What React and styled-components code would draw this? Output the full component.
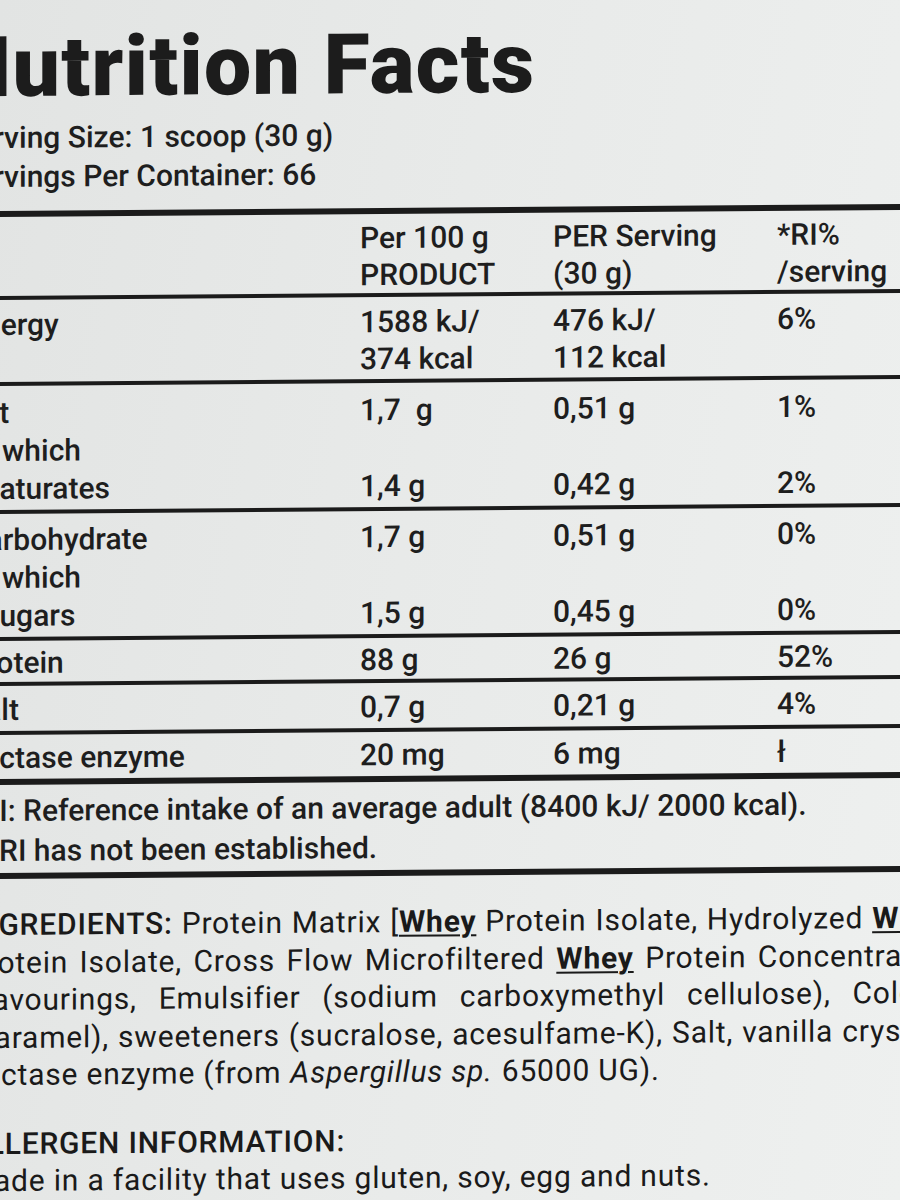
import styled, { createGlobalStyle } from "styled-components";

const GlobalStyle = createGlobalStyle`
  html, body {
    margin: 0;
    padding: 0;
  }
  body {
    background: #e7e9e8;
    font-family: Roboto, "Liberation Sans", sans-serif;
    color: #1e1e1e;
  }
`;

const Page = styled.div`
  width: 900px;
  height: 1200px;
  overflow: hidden;
  background: linear-gradient(100deg, #e2e4e3 0%, #e8eae9 45%, #eef0ef 100%);
`;

const Label = styled.div`
  width: 1000px;
  margin-left: -33px;
  padding-top: 26px;
  transform: skewY(-0.45deg);
  transform-origin: 33px 0;
`;

const Title = styled.h1`
  margin: 0 0 8px -15px;
  font-size: 84px;
  line-height: 84px;
  font-weight: 900;
  letter-spacing: 1.4px;
  color: #1c1c1c;
`;

const Serving = styled.div`
  margin-left: -8px;
  font-size: 30px;
  line-height: 39px;
  font-weight: 500;
`;

const Rule = styled.div`
  height: ${(p) => p.$h || 4}px;
  background: #1b1b1b;
  margin-top: ${(p) => p.$mt || 0}px;
`;

const Group = styled.div`
  padding: ${(p) => p.$pt || 0}px 0 ${(p) => p.$pb || 0}px;
  border-bottom: ${(p) => p.$line || 4}px solid #1b1b1b;
`;

const Row = styled.div`
  display: grid;
  grid-template-columns: 393px 193px 224px 1fr;
  font-size: 30px;
  line-height: ${(p) => p.$lh || 37}px;
  font-weight: 500;
`;

const Cell = styled.div`
  align-self: ${(p) => (p.$bottom ? "end" : "start")};
  white-space: pre;
`;

const Indent = styled.span`
  display: block;
  padding-left: 17px;
`;

const Note = styled.div`
  padding: 6px 0 2px;
  border-bottom: 6px solid #1b1b1b;
  font-size: 30px;
  line-height: 40px;
  font-weight: 500;
`;

const Mark = styled.span`
  display: inline-block;
  width: 32px;
`;

const Ingredients = styled.div`
  width: 978px;
  padding-top: 27px;
  font-size: 30px;
  line-height: 37.5px;
  font-weight: 400;
  letter-spacing: 0.8px;
  color: #1a1a1a;
`;

const Line = styled.div`
  display: flex;
  justify-content: ${(p) => (p.$justify ? "space-between" : "flex-start")};
  gap: 9px;
  white-space: nowrap;
`;

const Strong = styled.span`
  font-weight: 500;
`;

const Allergen = styled.span`
  font-weight: 700;
  text-decoration: underline;
  text-decoration-thickness: 2px;
  text-underline-offset: 3px;
`;

const Allergens = styled.div`
  margin-top: 31px;
  font-size: 30px;
  line-height: 37px;
  letter-spacing: 0.8px;
  color: #1a1a1a;
`;

const nutrients = [
  { pt: 6, pb: 2, rows: [{ label: "Energy", per100: "1588 kJ/\n374 kcal", serving: "476 kJ/\n112 kcal", ri: "6%" }] },
  {
    pt: 8,
    pb: 2,
    lh: 38,
    rows: [
      { label: "Fat", per100: "1,7  g", serving: "0,51 g", ri: "1%" },
      { label: "of which", sub: "saturates", per100: "1,4 g", serving: "0,42 g", ri: "2%" },
    ],
  },
  {
    pt: 7,
    pb: 2,
    lh: 38,
    rows: [
      { label: "Carbohydrate", per100: "1,7 g", serving: "0,51 g", ri: "0%" },
      { label: "of which", sub: "sugars", per100: "1,5 g", serving: "0,45 g", ri: "0%" },
    ],
  },
  { pt: 3, pb: 1, rows: [{ label: "Protein", per100: "88 g", serving: "26 g", ri: "52%" }] },
  { pt: 5, pb: 3, rows: [{ label: "Salt", per100: "0,7 g", serving: "0,21 g", ri: "4%" }] },
  { pt: 4, pb: 3, line: 6, rows: [{ label: "Lactase enzyme", per100: "20 mg", serving: "6 mg", ri: "ł" }] },
];

const W = () => <Allergen>Whey</Allergen>;

const ingredientLines = [
  [<Strong>INGREDIENTS:</Strong>, "Protein", "Matrix", <>[<W /></>, "Protein", "Isolate,", "Hydrolyzed", <W />],
  ["Protein", "Isolate,", "Cross", "Flow", "Microfiltered", <W />, "Protein", "Concentrate],"],
  ["Flavourings,", "Emulsifier", "(sodium", "carboxymethyl", "cellulose),", "Colour"],
  ["(caramel),", "sweeteners", "(sucralose,", "acesulfame-K),", "Salt,", "vanilla", "crystals,"],
];

const App = () => {
  return (
    <Page>
      <GlobalStyle />
      <Label>
        <Title>Nutrition Facts</Title>
        <Serving>Serving Size: 1 scoop (30 g)</Serving>
        <Serving>Servings Per Container: 66</Serving>

        <Rule $h={6} $mt={15} />
        <Group $pt={5} $pb={0}>
          <Row>
            <Cell />
            <Cell>{"Per 100 g\nPRODUCT"}</Cell>
            <Cell>{"PER Serving\n(30 g)"}</Cell>
            <Cell>{"*RI%\n/serving"}</Cell>
          </Row>
        </Group>

        {nutrients.map((group, i) => (
          <Group key={i} $pt={group.pt} $pb={group.pb} $line={group.line}>
            {group.rows.map((r) => (
              <Row key={r.label + (r.sub || "")} $lh={group.lh}>
                <Cell>
                  {r.label}
                  {r.sub && <Indent>{r.sub}</Indent>}
                </Cell>
                <Cell $bottom={!!r.sub}>{r.per100}</Cell>
                <Cell $bottom={!!r.sub}>{r.serving}</Cell>
                <Cell $bottom={!!r.sub}>{r.ri}</Cell>
              </Row>
            ))}
          </Group>
        ))}

        <Note>
          <div>*RI: Reference intake of an average adult (8400 kJ/ 2000 kcal).</div>
          <div>
            <Mark>ł</Mark>RI has not been established.
          </div>
        </Note>

        <Ingredients>
          {ingredientLines.map((words, i) => (
            <Line key={i} $justify>
              {words.map((w, j) => (
                <span key={j}>{w}</span>
              ))}
            </Line>
          ))}
          <Line>
            Lactase enzyme (from <i>Aspergillus sp.</i> 65000 UG).
          </Line>
        </Ingredients>

        <Allergens>
          <Strong>ALLERGEN INFORMATION:</Strong>
          <div>Made in a facility that uses gluten, soy, egg and nuts.</div>
        </Allergens>
      </Label>
    </Page>
  );
};

export default App;
